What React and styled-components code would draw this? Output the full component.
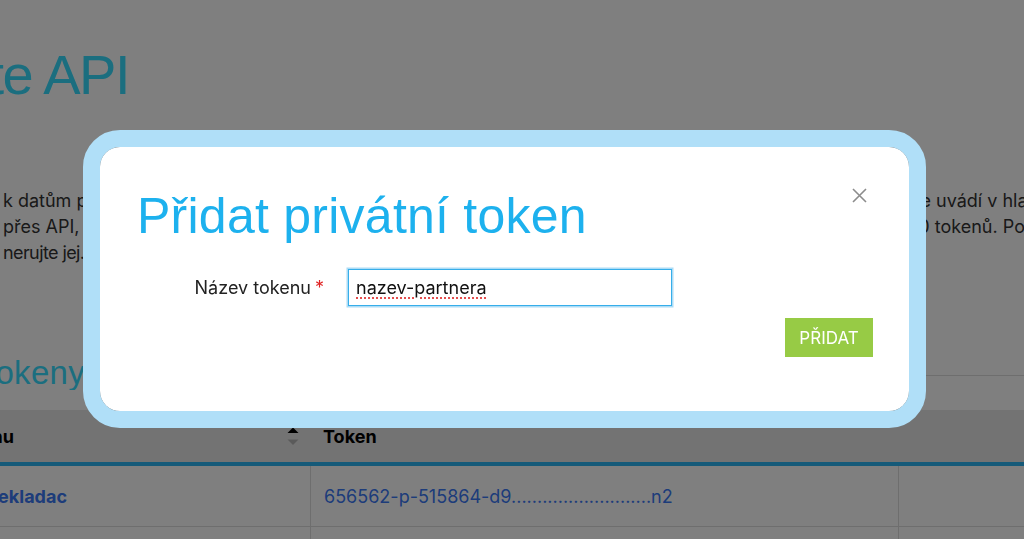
import React from "react";
import styled, { createGlobalStyle } from "styled-components";

const GlobalStyle = createGlobalStyle`
  html, body {
    margin: 0;
    padding: 0;
    background: #fff;
    overflow: hidden;
  }
  body {
    font-family: Inter, "Liberation Sans", sans-serif;
    color: #333;
  }
`;

export default function App() {
  return (
    <>
      <GlobalStyle />
      <Page>
        <Hero>
          <ClipEnd $w={129}>Propojte API</ClipEnd>
        </Hero>
        <Intro>
          <Line>
            <Part>k datům partnerů přistupujete pomocí privátního tokenu, který</Part>
            <Part>se uvádí v hlavičce požadavku.</Part>
          </Line>
          <Line>
            <Part>přes API, což umožňuje bezpečné napojení. Vytvořit můžete nejvýše</Part>
            <Part>10 tokenů. Pokud token unikne,</Part>
          </Line>
          <Line>
            <Part $tight>nerujte jej.</Part>
            <Part />
          </Line>
        </Intro>
        <SectionHead>
          <SectionTitle>
            <ClipEnd $w={85}>Privátní tokeny</ClipEnd>
          </SectionTitle>
          <Rule />
        </SectionHead>
        <Table>
          <HeadCell $first>
            <ClipEnd $w={14}>Název tokenu</ClipEnd>
            <SortIcon width="12" height="19" viewBox="0 0 12 19">
              <polygon points="0.5,6 6,0.5 11.5,6" fill="#000" />
              <polygon points="0.5,12.5 6,18 11.5,12.5" fill="#b5b5b5" />
            </SortIcon>
          </HeadCell>
          <HeadCell>Token</HeadCell>
          <HeadCell />
          <Cell $first $bold>
            <ClipEnd $w={67}>test-prekladac</ClipEnd>
          </Cell>
          <Cell>656562-p-515864-d9...........................n2</Cell>
          <Cell />
          <Cell $first $bold>
            <ClipEnd $w={60}>archiv</ClipEnd>
          </Cell>
          <Cell>884120-p-515864-a1...........................k7</Cell>
          <Cell />
        </Table>
      </Page>

      <Overlay>
        <Dialog>
          <DialogHead>
            <Title>Přidat privátní token</Title>
            <CloseButton aria-label="Zavřít">
              <svg width="15" height="15" viewBox="0 0 15 15">
                <path d="M1 1 L14 14 M14 1 L1 14" stroke="#8c8c8c" strokeWidth="1.6" />
              </svg>
            </CloseButton>
          </DialogHead>
          <FormRow>
            <Label>
              Název tokenu<Required>*</Required>
            </Label>
            <Field>
              <FieldText>nazev-partnera</FieldText>
            </Field>
          </FormRow>
          <Actions>
            <SubmitButton>PŘIDAT</SubmitButton>
          </Actions>
        </Dialog>
      </Overlay>
    </>
  );
}

const Page = styled.div`
  width: 1024px;
  height: 539px;
  overflow: hidden;
  display: flex;
  flex-direction: column;
`;

const ClipEnd = styled.span`
  display: flex;
  justify-content: flex-end;
  flex: none;
  width: ${(p) => p.$w}px;
  overflow: hidden;
  white-space: nowrap;
`;

const Hero = styled.h1`
  margin: 44px 0 0;
  font-family: "Liberation Sans", Arial, sans-serif;
  font-weight: 400;
  font-size: 56px;
  line-height: 62px;
  letter-spacing: -1.5px;
  color: #36dcff;
`;

const Intro = styled.div`
  margin-top: 82px;
  font-size: 18px;
  line-height: 26px;
  color: #333;
`;

const Line = styled.div`
  display: grid;
  grid-template-columns: 911px 1fr;
`;

const Part = styled.span`
  overflow: hidden;
  white-space: nowrap;
  letter-spacing: ${(p) => (p.$tight ? "-0.6px" : "normal")};
  &:first-child {
    padding-left: 3px;
  }
`;

const SectionHead = styled.div`
  margin-top: 90px;
  height: 34px;
  display: flex;
  align-items: center;
`;

const SectionTitle = styled.h2`
  margin: 0;
  font-family: "Liberation Sans", Arial, sans-serif;
  font-weight: 400;
  font-size: 33px;
  line-height: 34px;
  letter-spacing: 0.3px;
  color: #36dcff;
`;

const Rule = styled.div`
  flex: 1;
  height: 1px;
  margin: 4px 0 0 24px;
  background: #dcdcdc;
`;

const Table = styled.div`
  margin-top: 20px;
  display: grid;
  grid-template-columns: 310px 588px 1fr;
  font-size: 18px;
`;

const HeadCell = styled.div`
  height: 52px;
  display: flex;
  align-items: center;
  justify-content: ${(p) => (p.$first ? "space-between" : "flex-start")};
  padding: ${(p) => (p.$first ? "0 11px 0 0" : "0 0 0 13px")};
  background: #e6e6e6;
  border-bottom: 4px solid #2bb4f2;
  font-weight: 700;
  color: #000;
  white-space: nowrap;
`;

const SortIcon = styled.svg`
  display: block;
`;

const Cell = styled.div`
  height: 60px;
  display: flex;
  align-items: center;
  padding-left: ${(p) => (p.$first ? "0" : "13px")};
  border-bottom: 1px solid #dcdcdc;
  border-left: ${(p) => (p.$first ? "none" : "1px solid #dcdcdc")};
  color: #3b78f5;
  font-weight: ${(p) => (p.$bold ? 700 : 400)};
  white-space: nowrap;
  overflow: hidden;
`;

const Overlay = styled.div`
  position: fixed;
  inset: 0;
  background: rgba(0, 0, 0, 0.5);
  display: flex;
  align-items: flex-start;
  padding: 130px 0 0 83px;
`;

const Dialog = styled.div`
  width: 843px;
  box-sizing: border-box;
  border: 17px solid #b0dff8;
  border-radius: 37px;
  background: #fff;
  background-clip: padding-box;
  padding: 39px 36px 54px 37px;
`;

const DialogHead = styled.div`
  display: flex;
  justify-content: space-between;
  align-items: flex-start;
`;

const Title = styled.h2`
  margin: 0;
  font-family: "Liberation Sans", Arial, sans-serif;
  font-weight: 400;
  font-size: 50px;
  line-height: 60px;
  letter-spacing: 0.25px;
  color: #1db1ee;
`;

const CloseButton = styled.button`
  margin: 2px 6px 0 0;
  padding: 0;
  width: 15px;
  height: 15px;
  border: none;
  background: none;
  cursor: pointer;
  svg {
    display: block;
  }
`;

const FormRow = styled.div`
  margin-top: 23px;
  display: grid;
  grid-template-columns: 187px 324px;
  column-gap: 24px;
  align-items: center;
`;

const Label = styled.label`
  justify-self: end;
  font-size: 18px;
  line-height: 22px;
  color: #222;
  white-space: nowrap;
`;

const Required = styled.span`
  margin-left: 4px;
  color: #e02424;
`;

const Field = styled.div`
  box-sizing: border-box;
  height: 37px;
  display: flex;
  align-items: center;
  padding-left: 7px;
  border: 1px solid #36aeea;
  box-shadow: 0 0 0 1.5px rgba(90, 185, 238, 0.5);
  font-size: 18px;
  color: #111;
`;

const FieldText = styled.span`
  text-decoration: underline dotted #e23b3b;
  text-underline-offset: 4px;
`;

const Actions = styled.div`
  margin-top: 12px;
  display: flex;
  justify-content: flex-end;
`;

const SubmitButton = styled.button`
  width: 88px;
  height: 39px;
  border: none;
  padding: 0;
  background: #97cb45;
  color: #fff;
  font-family: Inter, "Liberation Sans", sans-serif;
  font-size: 17px;
  cursor: pointer;
`;
